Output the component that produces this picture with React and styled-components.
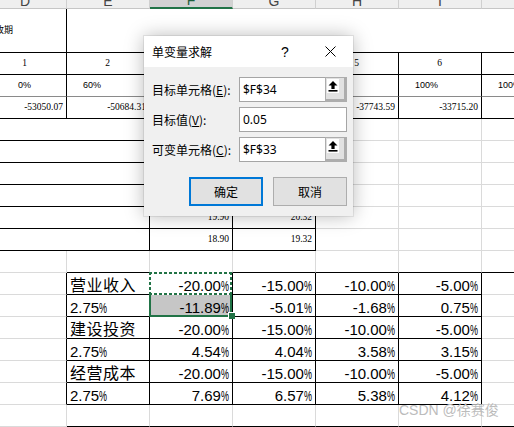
import React from "react";
import styled, { createGlobalStyle } from "styled-components";

const GlobalStyle = createGlobalStyle`
  html, body {
    margin: 0;
    padding: 0;
    background: #fff;
    overflow: hidden;
  }
`;

const BLACK = "#000";
const GRID = "#dadada";
const MID = "#8a8a8a";
const NONE = "transparent";

const fonts = {
  tiny: `9px/11px "Liberation Sans", "Noto Sans CJK SC", sans-serif`,
  serif: `9.5px/11px "Liberation Serif", serif`,
  big: `15px/16px "Liberation Sans", "Noto Sans CJK SC", sans-serif`,
};

const justify = { left: "flex-start", center: "center", right: "flex-end" };

const Page = styled.div`
  position: relative;
  width: 514px;
  height: 427px;
  overflow: hidden;
  background: #fff;
`;

const Sheet = styled.div`
  display: grid;
  grid-template-columns: repeat(7, 83px);
  grid-template-rows: 9px 44px repeat(18, 22px);
  margin-left: -16px;
`;

const Head = styled.div`
  box-sizing: border-box;
  display: flex;
  align-items: flex-end;
  justify-content: center;
  overflow: hidden;
  background: ${(p) => (p.$active ? "#d2d2d2" : "#efefef")};
  border-right: 1px solid #d0d0d0;
  border-bottom: ${(p) => (p.$active ? "2px solid #217346" : "1px solid #c6c6c6")};
  color: ${(p) => (p.$active ? "#1e5e3a" : "#444")};
  font: 14px/14px "Liberation Sans", sans-serif;
`;

const Cell = styled.div`
  box-sizing: border-box;
  position: relative;
  grid-column: span ${(p) => p.$span || 1};
  display: flex;
  align-items: ${(p) => (p.$kind === "big" ? "flex-end" : "center")};
  justify-content: ${(p) => justify[p.$align || "left"]};
  padding: 0 ${(p) => p.$pr ?? 3}px 0 ${(p) => p.$pl ?? 2}px;
  border-right: 1px solid ${(p) => p.$r};
  border-bottom: 1px solid ${(p) => p.$b};
  background: ${(p) => p.$bg || "transparent"};
  color: #000;
  font: ${(p) => fonts[p.$kind || "tiny"]};
  white-space: nowrap;
`;

const Pct = styled.span`
  display: inline-block;
  transform: scaleX(0.6);
  transform-origin: left center;
  margin-right: -5.3px;
`;

const Cjk = styled.span`
  font-size: 16px;
  letter-spacing: 0.5px;
`;

const Selection = styled.div`
  position: absolute;
  left: -1px;
  top: -1px;
  width: 83px;
  height: 45px;
  box-sizing: border-box;
  border: 2px solid #217346;
  z-index: 3;
  pointer-events: none;
`;

const Marquee = styled.div`
  position: absolute;
  left: -2px;
  top: -2px;
  width: 83px;
  height: 23px;
  --dash-h: repeating-linear-gradient(90deg, #217346 0 3px, #fff 3px 5px);
  --dash-v: repeating-linear-gradient(180deg, #217346 0 3px, #fff 3px 5px);
  background:
    var(--dash-h) top left / 100% 2px no-repeat,
    var(--dash-h) bottom left / 100% 2px no-repeat,
    var(--dash-v) top left / 2px 100% no-repeat,
    var(--dash-v) top right / 2px 100% no-repeat;
`;

const Handle = styled.div`
  position: absolute;
  left: 77px;
  top: 38px;
  width: 6px;
  height: 6px;
  background: #217346;
  border-left: 1px solid #fff;
  border-top: 1px solid #fff;
`;

const Dialog = styled.div`
  position: absolute;
  left: 144px;
  top: 36px;
  width: 209px;
  background: #f0f0f0;
  box-shadow: 0 0 18px rgba(0, 0, 0, 0.28), 0 0 0 1px rgba(0, 0, 0, 0.07);
  z-index: 10;
  font: 12px "Noto Sans CJK SC", sans-serif;
  color: #000;
`;

const TitleBar = styled.div`
  display: flex;
  align-items: center;
  height: 31px;
  background: #fff;
  padding-left: 8px;
`;

const Title = styled.div`
  flex: 1;
`;

const Help = styled.div`
  width: 30px;
  margin-right: 8px;
  text-align: center;
  font: 14px "Liberation Sans", sans-serif;
`;

const Close = styled.div`
  width: 45px;
  height: 31px;
  display: flex;
  align-items: center;
  justify-content: center;
`;

const Body = styled.div`
  padding: 10px 6px 10px 8px;
`;

const Form = styled.div`
  display: grid;
  grid-template-columns: 87px 108px;
  grid-auto-rows: 25px;
  row-gap: 5px;
  align-items: center;
`;

const Key = styled.span`
  text-decoration: underline;
`;

const Field = styled.div`
  box-sizing: border-box;
  display: flex;
  height: 25px;
  border: 1px solid #a5a5a5;
  background: #fff;
`;

const Value = styled.span`
  flex: 1;
  display: flex;
  align-items: center;
  padding-left: 3px;
  font: 12px "Noto Sans", sans-serif;
`;

const RefBtn = styled.div`
  box-sizing: border-box;
  width: 22px;
  margin: -1px -1px -1px 0;
  padding: 1px;
  background: #e1e1e1;
  border: solid #adadad;
  border-width: 1px 3px 3px 1px;
`;

const IconBox = styled.div`
  width: 12px;
  height: 14px;
  background: #fff;
  display: flex;
`;

const ButtonRow = styled.div`
  display: flex;
  justify-content: flex-end;
  gap: 10px;
  margin-top: 15px;
`;

const Btn = styled.div`
  box-sizing: border-box;
  width: 74px;
  height: 29px;
  display: flex;
  align-items: center;
  justify-content: center;
  background: #e1e1e1;
  border: ${(p) => (p.$primary ? "2px solid #0078d7" : "1px solid #adadad")};
`;

const Watermark = styled.div`
  position: absolute;
  left: 399px;
  top: 402px;
  z-index: 4;
  color: #bcbcbc;
  font: 14px/16px "Liberation Sans", "Noto Sans CJK SC", sans-serif;
  white-space: nowrap;
`;

const k = BLACK;
const g = GRID;
const m = MID;
const n = NONE;

// cells under the dialog stay empty: they can't be seen
const midRow = (a = "", b = "") => [
  { span: 2, r: k, b: k },
  { t: a, kind: "serif", align: "right", r: k, b: k },
  { t: b, kind: "serif", align: "right", r: k, b: k },
  { r: g, b: g },
  { r: g, b: g },
  { r: g, b: g },
];

const lower = [
  ["营业收入", "-20.00%", "-15.00%", "-10.00%", "-5.00%"],
  ["2.75%", "-11.89%", "-5.01%", "-1.68%", "0.75%"],
  ["建设投资", "-20.00%", "-15.00%", "-10.00%", "-5.00%"],
  ["2.75%", "4.54%", "4.04%", "3.58%", "3.15%"],
  ["经营成本", "-20.00%", "-15.00%", "-10.00%", "-5.00%"],
  ["2.75%", "7.69%", "6.57%", "5.38%", "4.12%"],
];

const lowerRows = lower.map((vals, ri) => [
  { r: k, b: g },
  { t: vals[0], kind: "big", pl: 3, r: k, b: k },
  ...vals.slice(1).map((t, ci) => ({
    t,
    kind: "big",
    align: "right",
    pr: 3,
    r: k,
    b: k,
    sel: ri === 0 && ci === 0,
    bg: ri === 1 && ci === 0 ? "#c6c6c6" : undefined,
  })),
  { r: g, b: g },
]);

const rows = [
  [{ t: "回收期", r: k, b: k }, { span: 6, r: n, b: k }],
  ["1", "2", "", "", "5", "6", "7"].map((t) => ({ t, kind: "serif", align: "center", r: k, b: k })),
  ["0%", "60%", "", "", "90%", "100%", "100%"].map((t, i) => ({
    t,
    align: i === 0 ? "center" : "left",
    pl: i === 0 ? 2 : 16,
    r: k,
    b: m,
  })),
  ["-53050.07", "-50684.31", "", "", "-37743.59", "-33715.20", ""].map((t) => ({
    t,
    kind: "serif",
    align: "right",
    r: k,
    b: k,
  })),
  midRow(),
  midRow(),
  midRow(),
  midRow(),
  midRow("19.90", "20.32"),
  midRow("18.90", "19.32"),
  [{ r: g, b: g }, ...Array.from({ length: 6 }, () => ({ r: g, b: k }))],
  ...lowerRows,
  [{ r: g, b: g }, ...Array.from({ length: 6 }, () => ({ r: g, b: k }))],
  Array.from({ length: 7 }, () => ({ r: g, b: g })),
];

const renderText = (t, kind) => {
  if (!t) return null;
  if (kind === "big" && /[\u4e00-\u9fff]/.test(t)) return <Cjk>{t}</Cjk>;
  if (kind === "big" && t.endsWith("%")) {
    return (
      <span>
        {t.slice(0, -1)}
        <Pct>%</Pct>
      </span>
    );
  }
  return <span>{t}</span>;
};

const UpArrow = () => (
  <svg width="12" height="14" viewBox="0 0 12 14">
    <path d="M6 2 L10.5 6.5 H7.6 V10 H4.4 V6.5 H1.5 Z" fill="#000" />
    <rect x="1.5" y="11" width="9" height="1.6" fill="#000" />
  </svg>
);

const CloseIcon = () => (
  <svg width="11" height="11" viewBox="0 0 11 11">
    <path d="M0.5 0.5 L10.5 10.5 M10.5 0.5 L0.5 10.5" stroke="#000" strokeWidth="1" />
  </svg>
);

const App = () => {
  return (
    <Page>
      <GlobalStyle />
      <Sheet>
        {["D", "E", "F", "G", "H", "I", "J"].map((h) => (
          <Head key={h} $active={h === "F"}>
            {h}
          </Head>
        ))}
        {rows.map((row, ri) =>
          row.map((c, ci) => (
            <Cell
              key={`${ri}-${ci}`}
              $span={c.span}
              $kind={c.kind}
              $align={c.align}
              $pl={c.pl}
              $pr={c.pr}
              $r={c.r}
              $b={c.b}
              $bg={c.bg}
            >
              {renderText(c.t, c.kind)}
              {c.sel && (
                <Selection>
                  <Marquee />
                  <Handle />
                </Selection>
              )}
            </Cell>
          ))
        )}
      </Sheet>

      <Dialog>
        <TitleBar>
          <Title>单变量求解</Title>
          <Help>?</Help>
          <Close>
            <CloseIcon />
          </Close>
        </TitleBar>
        <Body>
          <Form>
            <span>
              目标单元格(<Key>E</Key>):
            </span>
            <Field>
              <Value>$F$34</Value>
              <RefBtn>
                <IconBox>
                  <UpArrow />
                </IconBox>
              </RefBtn>
            </Field>
            <span>
              目标值(<Key>V</Key>):
            </span>
            <Field>
              <Value>0.05</Value>
            </Field>
            <span>
              可变单元格(<Key>C</Key>):
            </span>
            <Field>
              <Value>$F$33</Value>
              <RefBtn>
                <IconBox>
                  <UpArrow />
                </IconBox>
              </RefBtn>
            </Field>
          </Form>
          <ButtonRow>
            <Btn $primary>确定</Btn>
            <Btn>取消</Btn>
          </ButtonRow>
        </Body>
      </Dialog>

      <Watermark>CSDN @徐赛俊</Watermark>
    </Page>
  );
};

export default App;
